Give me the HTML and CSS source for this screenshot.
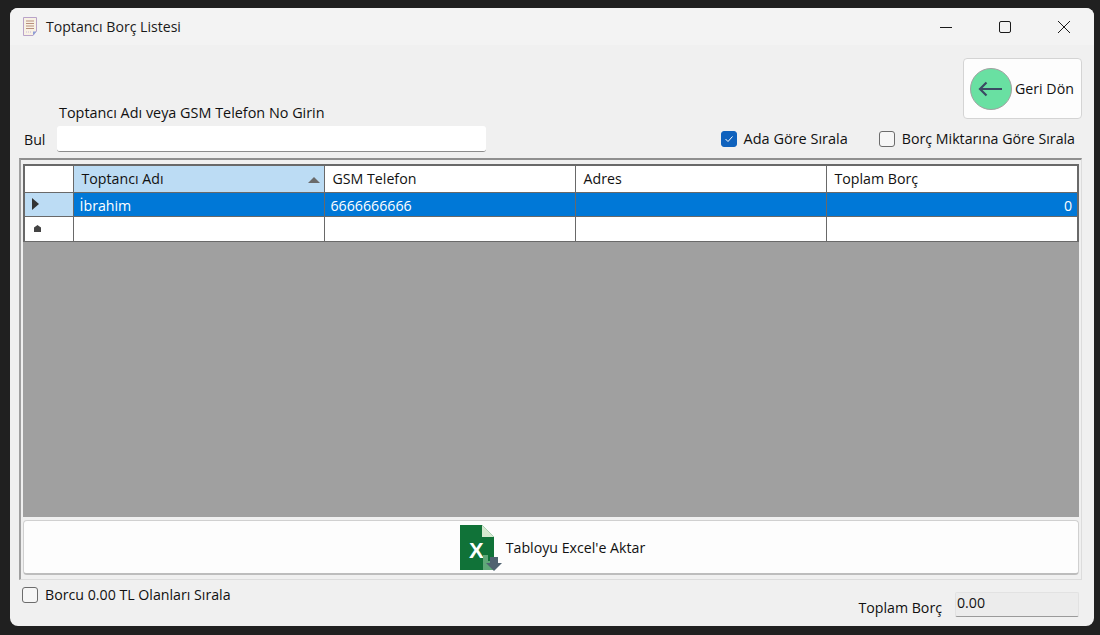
FILE: index.html
```html
<!DOCTYPE html>
<html lang="tr">

<head>
    <meta charset="UTF-8">
    <title>Toptancı Borç Listesi</title>
    <link rel="stylesheet" href="styles.css">
</head>

<body>
    <div class="window">
        <div class="titlebar">
            <svg class="app-icon" width="16" height="19" viewBox="0 0 16 19">
                <path d="M1.500 .5H14.500V14L11 18.500H1.500Z" fill="#f8f1e4" stroke="#b9a3c9"/>
                <path d="M4 4H12M4 6.500H12M4 9H12M4 11.500H12" stroke="#b98f7c" stroke-width="1"/>
                <path d="M4 15H9" stroke="#c9b6d8" stroke-dasharray="1 1"/>
                <path d="M11 18.500V14.500H14.500Z" fill="#8f9fd6"/>
            </svg>
            <span class="title">Toptancı Borç Listesi</span>
            <div class="win-buttons">
                <svg width="14" height="14" viewBox="0 0 14 14"><path d="M1 7.500H13" stroke="#1a1a1a"/></svg>
                <svg width="14" height="14" viewBox="0 0 14 14"><rect x="1.500" y="1.500" width="11" height="11" rx="1.500" fill="none" stroke="#1a1a1a"/></svg>
                <svg width="14" height="14" viewBox="0 0 14 14"><path d="M1 1L13 13M13 1L1 13" stroke="#1a1a1a"/></svg>
            </div>
        </div>

        <div class="content">
            <div class="top">
                <div class="search">
                    <div class="search-label">Toptancı Adı veya GSM Telefon No Girin</div>
                    <div class="search-row">
                        <label class="bul">Bul</label>
                        <input class="search-input" type="text">
                    </div>
                </div>
                <div class="top-right">
                    <button class="back-btn">
                        <svg width="42" height="42" viewBox="0 0 42 42">
                            <circle cx="21" cy="21" r="20.500" fill="#69e0a2" stroke="#a0a0a0"/>
                            <path d="M32 21H10M16.500 14.500L10 21L16.500 27.500" fill="none" stroke="#3b4a63" stroke-width="2.200"/>
                        </svg>
                        <span>Geri Dön</span>
                    </button>
                    <div class="sort-row">
                        <label class="check check-name"><span class="box checked"><svg width="10" height="8" viewBox="0 0 10 8"><path d="M1.500 4L4 6.500L8.500 1.500" fill="none" stroke="#fff"/></svg></span>Ada Göre Sırala</label>
                        <label class="check"><span class="box"></span>Borç Miktarına Göre Sırala</label>
                    </div>
                </div>
            </div>

            <div class="panel">
                <div class="grid-wrap">
                    <table class="grid">
                        <colgroup>
                            <col class="col-head">
                            <col class="col-data">
                            <col class="col-data">
                            <col class="col-data">
                            <col class="col-last">
                        </colgroup>
                        <tr class="head-row">
                            <th></th>
                            <th class="sorted">Toptancı Adı<span class="sort-arrow"></span></th>
                            <th>GSM Telefon</th>
                            <th>Adres</th>
                            <th>Toplam Borç</th>
                        </tr>
                        <tr class="selected">
                            <td class="row-head"><span class="row-arrow"></span></td>
                            <td>İbrahim</td>
                            <td>6666666666</td>
                            <td></td>
                            <td class="num">0</td>
                        </tr>
                        <tr class="new-row">
                            <td class="row-head"><span class="row-star"></span></td>
                            <td></td>
                            <td></td>
                            <td></td>
                            <td></td>
                        </tr>
                    </table>
                </div>
                <button class="excel-btn">
                    <svg width="44" height="47" viewBox="0 0 44 47">
                        <path d="M0 0H22L34 12V45H0Z" fill="#107238"/>
                        <path d="M22 0L34 12H22Z" fill="#d6ead0"/>
                        <text x="9" y="33" class="excel-x">X</text>
                        <path d="M23 30H28V36H34V45H23Z" fill="#5fa878"/>
                        <path d="M30 32H38V38H42L34 46L26 38H30Z" fill="#4f6270"/>
                    </svg>
                    <span>Tabloyu Excel'e Aktar</span>
                </button>
            </div>

            <div class="bottom">
                <label class="check"><span class="box"></span>Borcu 0.00 TL Olanları Sırala</label>
                <div class="total">
                    <span>Toplam Borç</span>
                    <div class="total-box">0.00</div>
                </div>
            </div>
        </div>
    </div>
</body>

</html>
```

FILE: styles.css
```css
* {
    box-sizing: border-box;
}

html, body {
    height: 100%;
}

body {
    margin: 0;
    padding: 8px 6px 9px 10px;
    background-color: #202020;
    font-family: "Open Sans", "Noto Sans", sans-serif;
    font-size: 14.2px;
    color: #111;
    overflow: hidden;
}

.window {
    height: 618px;
    background-color: #f0f0f0;
    border-radius: 8px;
    overflow: hidden;
    display: flex;
    flex-direction: column;
}

.titlebar {
    height: 37px;
    flex: none;
    background-color: #f3f3f3;
    display: flex;
    align-items: center;
    padding-left: 12px;
}

.app-icon {
    margin-right: 8px;
}

.title {
    font-size: 14.1px;
    color: #1a1a1a;
}

.win-buttons {
    margin-left: auto;
    display: flex;
    gap: 45px;
    padding-right: 23px;
}

.content {
    flex: 1;
    display: flex;
    flex-direction: column;
    padding: 13px 12px 0 9px;
}

.top {
    height: 100px;
    flex: none;
    display: flex;
    justify-content: space-between;
    align-items: flex-end;
}

.search {
    padding-left: 5px;
    padding-bottom: 6px;
}

.search-label {
    margin-left: 35px;
    margin-bottom: 4px;
    font-size: 14.4px;
}

.search-row {
    display: flex;
    align-items: center;
}

.bul {
    width: 33px;
}

.search-input {
    width: 429px;
    height: 26px;
    border: none;
    border-bottom: 1px solid #8c8c8c;
    border-radius: 3px;
    background-color: #fff;
}

.top-right {
    display: flex;
    flex-direction: column;
    align-items: flex-end;
}

.back-btn {
    width: 119px;
    height: 61px;
    margin-bottom: 10px;
    padding: 0 0 0 6px;
    display: flex;
    align-items: center;
    gap: 3px;
    background-color: #fdfdfd;
    border: 1px solid #d4d4d4;
    border-radius: 4px;
    font: inherit;
    color: #111;
}

.sort-row {
    display: flex;
    gap: 31px;
    padding-right: 7px;
    padding-bottom: 10px;
}

.check {
    display: flex;
    align-items: center;
    gap: 7px;
}

.check-name {
    font-size: 14.5px;
}

.box {
    width: 16px;
    height: 16px;
    display: flex;
    align-items: center;
    justify-content: center;
    background-color: #f6f6f6;
    border: 1px solid #6c6c6c;
    border-radius: 3px;
}

.box.checked {
    background-color: #0f62bd;
    border-color: #0f62bd;
}

.panel {
    height: 422px;
    flex: none;
    padding: 4px 2px 4px 2px;
    border-top: 2px solid #8f8f8f;
    border-left: 2px solid #a0a0a0;
    border-right: 1px solid #dcdcdc;
    border-bottom: 1px solid #dcdcdc;
    display: flex;
    flex-direction: column;
    gap: 3px;
}

.grid-wrap {
    flex: 1;
    background-color: #a0a0a0;
}

.grid {
    width: 1056px;
    table-layout: fixed;
    border-collapse: collapse;
    background-color: #fff;
    border: 2px solid #696969;
    border-bottom: none;
}

.col-head {
    width: 49px;
}

.col-data {
    width: 251px;
}

.col-last {
    width: 252px;
}

.grid th, .grid td {
    padding: 0;
    border: 1px solid #696969;
    font-weight: normal;
    text-align: left;
    white-space: nowrap;
}

.grid th {
    height: 27px;
    padding-left: 8px;
}

.grid td {
    height: 25px;
    padding-left: 6px;
}

.grid th.sorted {
    position: relative;
    background-color: #bcdcf4;
}

.sort-arrow {
    position: absolute;
    right: 4px;
    top: 11px;
    border-left: 6px solid transparent;
    border-right: 6px solid transparent;
    border-bottom: 6px solid #6a6a6a;
}

.grid .selected td {
    height: 24px;
    padding-top: 2px;
    background-color: #0078d7;
    color: #fff;
}

.grid .selected td.row-head {
    padding-top: 0;
    padding-left: 5px;
    background-color: #bcdcf4;
}

.grid .new-row td.row-head {
    padding-left: 5px;
}

.grid td.num {
    text-align: right;
    padding-right: 5px;
}

.row-arrow {
    display: block;
    margin-left: 2px;
    width: 0;
    border-top: 6px solid transparent;
    border-bottom: 6px solid transparent;
    border-left: 7px solid #333;
}

.row-star {
    display: block;
    margin-left: 4px;
    width: 7px;
    height: 7px;
    background-color: #444;
    clip-path: polygon(50% 0, 100% 35%, 100% 100%, 0 100%, 0 35%);
}

.excel-btn {
    height: 55px;
    flex: none;
    display: flex;
    align-items: center;
    justify-content: center;
    background-color: #fdfdfd;
    border: 1px solid #d0d0d0;
    border-bottom: 2px solid #bdbdbd;
    border-radius: 4px;
    font: inherit;
    color: #111;
    padding: 0 0 0 3px;
}

.excel-btn svg {
    margin-top: 2px;
    margin-right: 2px;
}

.excel-x {
    font-family: "Liberation Sans", sans-serif;
    font-size: 22px;
    font-weight: bold;
    fill: #fff;
}

.bottom {
    flex: 1;
    display: flex;
    justify-content: space-between;
    padding: 5px 3px 0 3px;
}

.bottom .check {
    align-self: flex-start;
}

.total {
    display: flex;
    align-items: flex-start;
    gap: 13px;
    padding-top: 7px;
}

.total span {
    padding-top: 6px;
}

.total-box {
    width: 124px;
    height: 25px;
    padding-left: 1px;
    background-color: #ececec;
    border: 1px solid #e2e2e2;
    border-bottom: 1px solid #9a9a9a;
    border-radius: 2px;
}
```
